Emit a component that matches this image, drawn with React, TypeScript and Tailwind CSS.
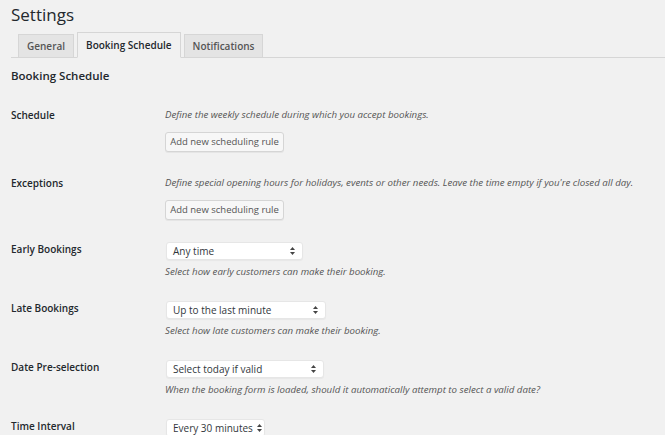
const font = { fontFamily: '"Open Sans", "Noto Sans", sans-serif' };

const Arrows = () => (
  <svg width="5" height="8" viewBox="0 0 5 8" className="shrink-0">
    <path d="M2.5 0 L5 3 L0 3 Z" fill="#444" />
    <path d="M2.5 8 L5 5 L0 5 Z" fill="#444" />
  </svg>
);

const Select = ({ value, width }: { value: string; width: string }) => (
  <div
    className={`flex h-[18px] items-center justify-between gap-1 rounded-[3px] border border-[#e6e6e6] bg-white pl-[6px] pr-[7px] text-[10px] text-[#32373c] shadow-[0_1px_1px_rgba(0,0,0,0.04)] ${width}`}
  >
    <span className="whitespace-nowrap leading-[16px]">{value}</span>
    <Arrows />
  </div>
);

const Button = () => (
  <button
    className="mt-[10px] flex h-[20px] w-[119px] items-center justify-center rounded-[3px] border border-[#d5d5d5] bg-[#f7f7f7] text-[9.5px] text-[#555] shadow-[0_1px_0_#e5e5e5]"
    style={font}
  >
    Add new scheduling rule
  </button>
);

const Label = ({ children }: { children: string }) => (
  <div className="w-[154px] shrink-0 text-[10px] font-semibold leading-[14px] text-[#23282d]">{children}</div>
);

const Desc = ({ children, className = "" }: { children: string; className?: string }) => (
  <p className={`whitespace-nowrap text-[9.7px] italic leading-[14px] text-[#555] ${className}`}>{children}</p>
);

export default function App() {
  const tabs = ["General", "Booking Schedule", "Notifications"];
  return (
    <div className="h-[435px] w-[665px] overflow-hidden bg-[#f1f1f1] pl-[11px]" style={font}>
      <h1 className="pt-[4px] text-[17px] leading-[22px] text-[#23282d]">Settings</h1>

      <div className="mt-[6px] flex h-[26px] items-end gap-[3px] border-b border-[#d6d6d6] pl-[7px]">
        {tabs.map((t) =>
          t === "Booking Schedule" ? (
            <div
              key={t}
              className="-mb-px flex h-[26px] items-center border border-[#d6d6d6] border-b-[#f1f1f1] bg-[#f1f1f1] px-[8px] text-[10px] font-semibold text-[#23282d]"
            >
              {t}
            </div>
          ) : (
            <div
              key={t}
              className="-mb-px flex h-[24px] items-center border border-[#d6d6d6] bg-[#e4e4e4] px-[8px] text-[10px] font-semibold text-[#555]"
            >
              {t}
            </div>
          )
        )}
      </div>

      <h2 className="mt-[10px] text-[11.5px] font-semibold leading-[16px] text-[#23282d]">Booking Schedule</h2>

      <div className="mt-[24px] flex">
        <Label>Schedule</Label>
        <div>
          <Desc>Define the weekly schedule during which you accept bookings.</Desc>
          <Button />
        </div>
      </div>

      <div className="mt-[24px] flex">
        <Label>Exceptions</Label>
        <div>
          <Desc>Define special opening hours for holidays, events or other needs. Leave the time empty if you're closed all day.</Desc>
          <Button />
        </div>
      </div>

      <div className="mt-[22px] flex">
        <Label>Early Bookings</Label>
        <div className="pl-px">
          <Select value="Any time" width="w-[137px]" />
          <Desc className="-ml-px mt-[5px]">Select how early customers can make their booking.</Desc>
        </div>
      </div>

      <div className="mt-[22px] flex">
        <Label>Late Bookings</Label>
        <div className="pl-px">
          <Select value="Up to the last minute" width="w-[160px]" />
          <Desc className="-ml-px mt-[5px]">Select how late customers can make their booking.</Desc>
        </div>
      </div>

      <div className="mt-[22px] flex">
        <Label>Date Pre-selection</Label>
        <div className="pl-px">
          <Select value="Select today if valid" width="w-[158px]" />
          <Desc className="-ml-px mt-[5px]">When the booking form is loaded, should it automatically attempt to select a valid date?</Desc>
        </div>
      </div>

      <div className="mt-[22px] flex">
        <Label>Time Interval</Label>
        <div className="pl-px">
          <Select value="Every 30 minutes" width="w-[99px]" />
        </div>
      </div>
    </div>
  );
}
